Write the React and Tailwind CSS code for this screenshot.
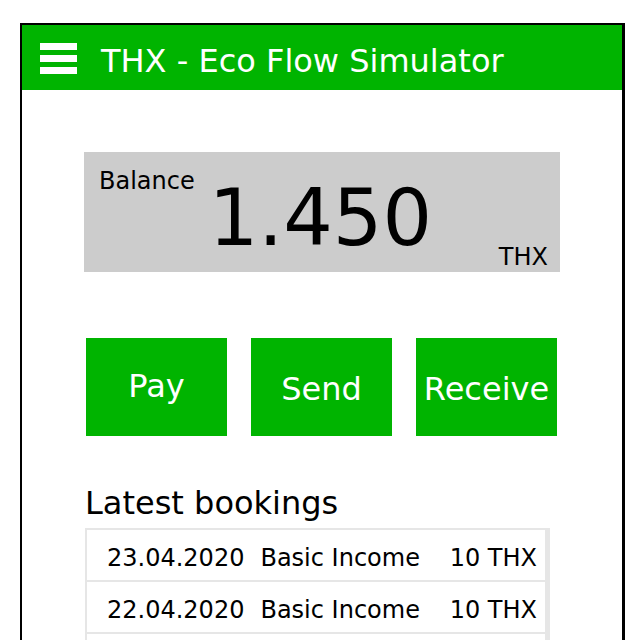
export default function App() {
  const rows = [
    ["23.04.2020", "Basic Income", "10 THX"],
    ["22.04.2020", "Basic Income", "10 THX"],
  ];
  return (
    <div className="h-[640px] w-[640px] overflow-hidden bg-white font-['DejaVu_Sans',sans-serif]">
      <div className="ml-[20px] mt-[23px] h-[700px] w-[605px] border-l-2 border-r-[3px] border-t-2 border-black">
        <header className="flex h-[65px] items-start bg-[#00b400] pl-[18px] text-white">
          <div className="mt-[18px] flex flex-col gap-[5px]">
            <span className="block h-[7px] w-[37px] bg-white" />
            <span className="block h-[7px] w-[37px] bg-white" />
            <span className="block h-[7px] w-[37px] bg-white" />
          </div>
          <h1 className="ml-[24px] mt-[20px] text-[32px] leading-[32px]">THX - Eco Flow Simulator</h1>
        </header>

        <div className="ml-[62px] mt-[62px] flex h-[120px] w-[476px] items-start bg-[#cccccc] pr-[12px] text-black">
          <span className="ml-[15px] mt-[17px] text-[24px] leading-[24px]">Balance</span>
          <span className="ml-[14px] mt-[27px] text-[78px] leading-[78px]">1.450</span>
          <span className="mb-[3px] ml-auto self-end text-[24px] leading-[24px]">THX</span>
        </div>

        <div className="ml-[64px] mt-[66px] flex gap-[24px]">
          <button className="flex h-[98px] w-[141px] items-center justify-center bg-[#00b400] pb-[2px] text-[32px] leading-[32px] text-white">Pay</button>
          <button className="flex h-[98px] w-[141px] items-center justify-center bg-[#00b400] pt-[4px] text-[32px] leading-[32px] text-white">Send</button>
          <button className="flex h-[98px] w-[141px] items-center justify-center bg-[#00b400] pt-[4px] text-[32px] leading-[32px] text-white">Receive</button>
        </div>

        <h2 className="ml-[63px] mt-[51px] text-[32px] leading-[32px] text-black">Latest bookings</h2>

        <div className="ml-[63px] mt-[9px] w-[465px] border-l-2 border-r-[5px] border-t-2 border-[#e6e6e6]">
          {rows.map((r, i) => (
            <div key={i} className="flex h-[52px] items-center border-b-2 border-[#e6e6e6] pl-[20px] pr-[8px] pt-[5px] text-[24px] leading-[24px] text-black">
              <span>{r[0]}</span>
              <span className="ml-[16px]">{r[1]}</span>
              <span className="ml-auto">{r[2]}</span>
            </div>
          ))}
          <div className="h-[52px] border-b-2 border-[#e6e6e6]" />
        </div>
      </div>
    </div>
  );
}
